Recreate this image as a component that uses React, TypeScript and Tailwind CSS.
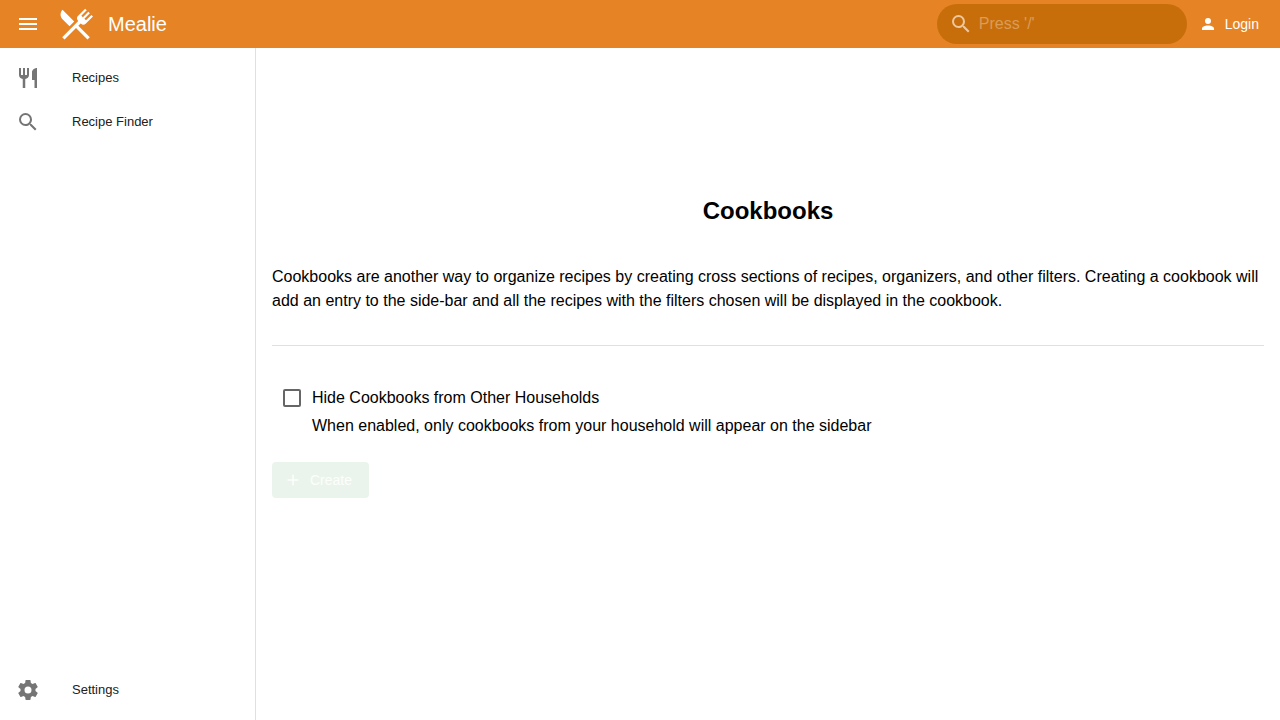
import { useState } from "react";

const icons = {
  menu: "M3,6H21V8H3V6M3,11H21V13H3V11M3,16H21V18H3V16Z",
  magnify:
    "M9.5,3A6.5,6.5 0 0,1 16,9.5C16,11.11 15.41,12.59 14.44,13.73L14.71,14H15.5L20.5,19L19,20.5L14,15.5V14.71L13.73,14.44C12.59,15.41 11.11,16 9.5,16A6.5,6.5 0 0,1 3,9.5A6.5,6.5 0 0,1 9.5,3M9.5,5C7,5 5,7 5,9.5C5,12 7,14 9.5,14C12,14 14,12 14,9.5C14,7 12,5 9.5,5Z",
  forkKnife:
    "M11,9H9V2H7V9H5V2H3V9C3,11.12 4.66,12.84 6.75,12.97V22H9.25V12.97C11.34,12.84 13,11.12 13,9V2H11V9M16,6V14H18.5V22H21V2C18.24,2 16,4.24 16,6Z",
  logo:
    "M8.1,13.34L3.91,9.16C2.35,7.59 2.35,5.06 3.91,3.5L10.93,10.5L8.1,13.34M13.41,13L20.29,19.88L18.88,21.29L12,14.41L5.12,21.29L3.71,19.88L13.36,10.22L13.16,10C12.38,9.23 12.38,7.97 13.16,7.19L17.5,2.82L18.43,3.74L15.19,7L16.15,7.94L19.39,4.69L20.31,5.61L17.06,8.85L18,9.81L21.26,6.56L22.18,7.5L17.81,11.84C17.03,12.62 15.77,12.62 15,11.84L14.78,11.64L13.41,13Z",
  account:
    "M12,4A4,4 0 0,1 16,8A4,4 0 0,1 12,12A4,4 0 0,1 8,8A4,4 0 0,1 12,4M12,14C16.42,14 20,15.79 20,18V20H4V18C4,15.79 7.58,14 12,14Z",
  cog:
    "M12,15.5A3.5,3.5 0 0,1 8.5,12A3.5,3.5 0 0,1 12,8.5A3.5,3.5 0 0,1 15.5,12A3.5,3.5 0 0,1 12,15.5M19.43,12.97C19.47,12.65 19.5,12.33 19.5,12C19.5,11.67 19.47,11.34 19.43,11L21.54,9.37C21.73,9.22 21.78,8.95 21.66,8.73L19.66,5.27C19.54,5.05 19.27,4.96 19.05,5.05L16.56,6.05C16.04,5.66 15.5,5.32 14.87,5.07L14.5,2.42C14.46,2.18 14.25,2 14,2H10C9.75,2 9.54,2.18 9.5,2.42L9.13,5.07C8.5,5.32 7.96,5.66 7.44,6.05L4.95,5.05C4.73,4.96 4.46,5.05 4.34,5.27L2.34,8.73C2.21,8.95 2.27,9.22 2.46,9.37L4.57,11C4.53,11.34 4.5,11.67 4.5,12C4.5,12.33 4.53,12.65 4.57,12.97L2.46,14.63C2.27,14.78 2.21,15.05 2.34,15.27L4.34,18.73C4.46,18.95 4.73,19.03 4.95,18.95L7.44,17.94C7.96,18.34 8.5,18.68 9.13,18.93L9.5,21.58C9.54,21.82 9.75,22 10,22H14C14.25,22 14.46,21.82 14.5,21.58L14.87,18.93C15.5,18.67 16.04,18.34 16.56,17.94L19.05,18.95C19.27,19.03 19.54,18.95 19.66,18.73L21.66,15.27C21.78,15.05 21.73,14.78 21.54,14.63L19.43,12.97Z",
  plus: "M19,13H13V19H11V13H5V11H11V5H13V11H19V13Z",
};

function Icon({ name, className }: { name: keyof typeof icons; className: string }) {
  return (
    <svg viewBox="0 0 24 24" fill="currentColor" aria-hidden="true" className={`shrink-0 ${className}`}>
      <path d={icons[name]} />
    </svg>
  );
}

function NavItem({ icon, label }: { icon: keyof typeof icons; label: string }) {
  return (
    <a href="#" className="flex h-11 items-center gap-8 px-4 text-[13px] leading-5 text-[#212121]">
      <Icon name={icon} className="size-6 text-[#757575]" />
      {label}
    </a>
  );
}

export default function App() {
  const [hidden, setHidden] = useState(false);

  return (
    <div className="flex min-h-screen flex-col bg-white font-['Liberation_Sans',Arial,sans-serif] text-black">
      <header className="flex h-12 items-center bg-[#e58325] pr-[21px] pl-4 text-white">
        <button type="button" aria-label="Toggle menu">
          <Icon name="menu" className="size-6" />
        </button>
        <a href="#" className="ml-4 flex items-center gap-3 text-xl">
          <Icon name="logo" className="size-10" />
          Mealie
        </a>
        <label className="ml-auto flex h-10 w-[250px] items-center gap-1.5 rounded-full bg-[#c76e0b] px-3">
          <Icon name="magnify" className="size-6 text-[#efc79d]" />
          <input
            type="text"
            aria-label="Search"
            placeholder="Press '/'"
            className="w-full min-w-0 bg-transparent text-base outline-none placeholder:text-[#db9c56]"
          />
        </label>
        <a href="#" className="ml-3 flex items-center gap-2 text-sm">
          <Icon name="account" className="size-[18px]" />
          Login
        </a>
      </header>

      <div className="flex grow">
        <nav className="flex w-64 shrink-0 flex-col justify-between border-r border-[#e0e0e0] py-2">
          <div>
            <NavItem icon="forkKnife" label="Recipes" />
            <NavItem icon="magnify" label="Recipe Finder" />
          </div>
          <NavItem icon="cog" label="Settings" />
        </nav>

        <main className="min-w-0 grow px-4 pt-[147px]">
          <h1 className="text-center text-2xl font-bold">Cookbooks</h1>
          <p className="mt-[38px] text-base">
            Cookbooks are another way to organize recipes by creating cross sections of recipes, organizers, and other
            filters. Creating a cookbook will add an entry to the side-bar and all the recipes with the filters chosen
            will be displayed in the cookbook.
          </p>
          <hr className="my-8 border-[#e0e0e0]" />
          <div className="flex items-start gap-[11px] pt-2 pl-[11px]">
            <input
              id="hide-cookbooks"
              type="checkbox"
              checked={hidden}
              onChange={(event) => setHidden(event.target.checked)}
              aria-describedby="hide-cookbooks-hint"
              className="mt-[3px] size-[18px] shrink-0 appearance-none rounded-xs border-2 border-[#666666] bg-white checked:bg-[#666666]"
            />
            <div className="flex flex-col gap-1 text-base">
              <label htmlFor="hide-cookbooks">Hide Cookbooks from Other Households</label>
              <p id="hide-cookbooks-hint">When enabled, only cookbooks from your household will appear on the sidebar</p>
            </div>
          </div>
          <button
            type="button"
            disabled
            className="mt-6 flex h-9 items-center gap-2 rounded bg-[#ebf4ec] pr-[17px] pl-3 text-sm text-[#fcfefc]"
          >
            <Icon name="plus" className="size-[18px]" />
            Create
          </button>
        </main>
      </div>
    </div>
  );
}
